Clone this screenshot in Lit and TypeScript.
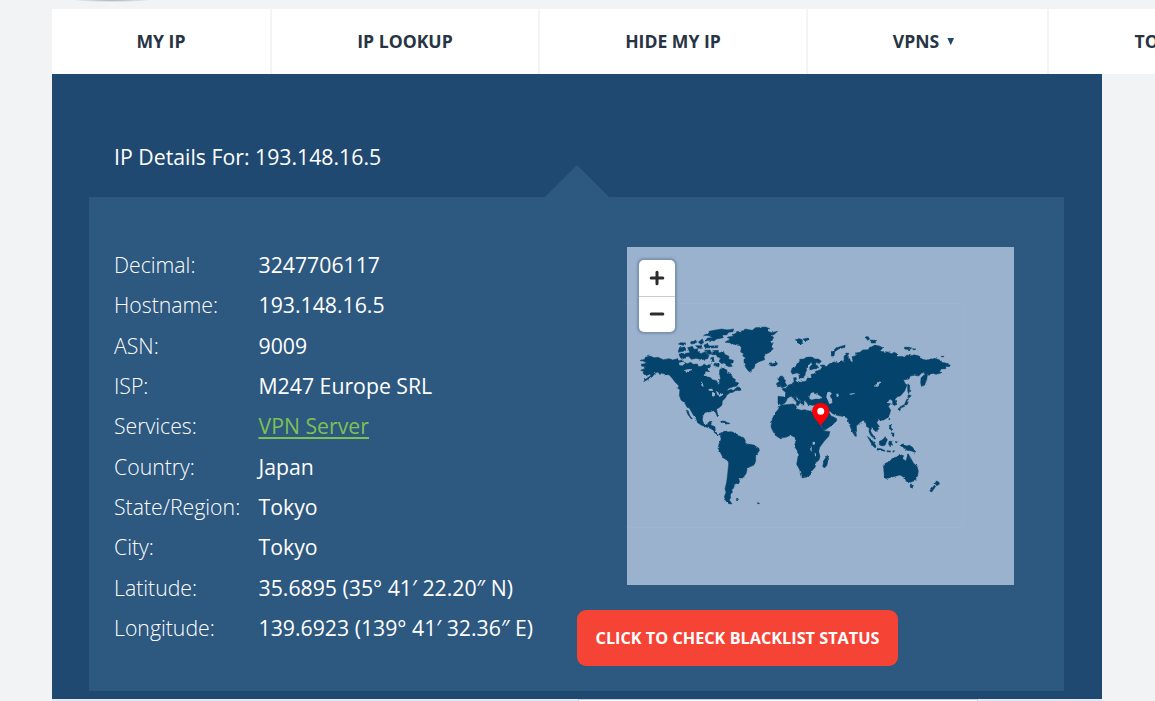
import { LitElement, html, css, svg } from "lit";
import { customElement } from "lit/decorators.js";

const NAV = [
  { label: "MY IP", cls: "t1" },
  { label: "IP LOOKUP", cls: "t2" },
  { label: "HIDE MY IP", cls: "t3" },
  { label: "VPNS", cls: "t4", menu: true },
  { label: "TOOLS", cls: "t5", menu: true },
];

const ROWS = [
  ["Decimal:", "3247706117"],
  ["Hostname:", "193.148.16.5"],
  ["ASN:", "9009"],
  ["ISP:", "M247 Europe SRL"],
  ["Services:", "VPN Server"],
  ["Country:", "Japan"],
  ["State/Region:", "Tokyo"],
  ["City:", "Tokyo"],
  ["Latitude:", "35.6895 (35° 41′ 22.20″ N)"],
  ["Longitude:", "139.6923 (139° 41′ 32.36″ E)"],
];

// Landmasses of the western hemisphere
const WEST = [
  "M33 151L44 148 46 142 60 138 72 143 84 142 100 149 118 146 127 150 140 147 148 152 158 149 160 156 172 161 182 157 190 163 202 162 206 170 217 168 222 162 232 168 241 163 241 171 234 177 236 185 226 184 224 195 232 201 242 203 247 209 260 212 264 224 269 220 268 210 272 204 268 195 269 180 276 172 284 174 290 181 292 192 299 188 304 193 308 204 316 208 315 215 326 219 323 227 308 231 296 235 290 243 304 238 309 242 322 231 328 232 336 239 327 242 319 240 309 247 300 248 291 255 286 264 277 273 276 285 270 291 260 298 262 310 266 318 262 320 257 308 250 302 238 306 226 307 219 315 217 330 222 342 232 344 236 335 246 334 242 345 255 350 256 364 263 372 274 369 272 375 262 375 249 364 244 356 228 351 213 345 203 338 199 327 190 315 178 294 171 292 165 280 153 270 148 256 150 239 143 235 147 228 135 216 126 204 118 195 104 192 94 189 90 194 84 186 76 189 67 200 56 207 41 215 45 209 62 197 60 192 48 197 39 190 41 184 32 181 43 176 49 171 34 168 34 163 49 160 46 156Z",
  "M168 301L174 302 179 316 187 326 184 327 175 316Z",
  "M275 370L280 365 289 361 292 366 303 365 316 368 321 376 334 380 342 384 347 394 345 400 355 402 371 405 387 415 388 422 377 437 377 454 371 466 360 470 352 475 348 491 339 503 331 507 326 504 329 517 313 523 311 534 305 540 308 546 301 553 302 563 298 570 306 582 296 581 288 574 283 560 288 547 285 537 290 516 293 491 296 461 294 452 279 443 270 425 264 415 268 398 273 389 271 378Z",
  "M285 97L300 87 294 81 312 78 306 74 319 70 319 65 340 63 345 57 367 61 376 53 407 51 419 56 410 62 425 68 443 64 433 73 424 77 431 82 424 95 429 101 423 110 430 116 417 128 408 132 402 140 404 149 387 155 376 162 372 175 365 178 363 187 356 184 347 172 342 158 342 148 348 144 338 138 341 131 332 126 334 112 325 103 306 103 299 98Z",
  "M221 76L238 69 237 64 257 60 275 57 292 60 311 57 309 65 296 67 291 74 277 76 280 83 260 87 252 93 238 91 226 94 232 84 248 83 237 77Z",
  "M147 113L164 111 168 118 160 124 145 127ZM145 102L152 98 168 99 158 106ZM173 113L187 109 192 118 203 116 203 124 213 131 225 125 237 137 233 146 216 149 198 145 184 148 176 139 165 141 166 130 180 128ZM147 132L160 130 169 138 162 146 150 141Z",
  "M181 97L197 91 202 96 188 102ZM205 96L217 87 221 98 212 103ZM197 107L213 107 217 115 205 115ZM222 105L232 101 238 108 264 107 263 113 241 114 226 113ZM224 121L240 120 247 132 234 133Z",
  "M248 122L262 121 268 129 280 124 284 133 297 139 296 147 310 151 309 159 301 160 307 169 297 170 286 165 283 158 275 161 267 154 272 145 262 141 259 134 248 134ZM254 159L268 162 266 171 251 166ZM242 144L250 141 253 151 245 155Z",
  "M416 160L424 158 428 162 438 156 443 162 435 168 424 168 417 164Z",
  "M455 204L462 201 461 208 467 211 464 217 471 227 463 231 453 233 458 225 454 218ZM444 219L451 217 450 229 442 231Z",
  "M272 334L282 333 291 337 286 339 273 337ZM282 338L295 338 300 341 286 342Z",
  "M319 568L326 568 322 573ZM382 578L389 580 384 582Z",
];

// Landmasses of the eastern hemisphere
const EAST = [
  "M39 214L60 216 62 202 52 194 53 190 66 190 69 181 79 177 87 171 86 158 94 158 94 168 107 172 124 168 127 159 140 159 138 148 154 146 150 140 166 134 172 126 165 121 177 120 184 125 193 116 207 111 219 114 228 106 238 112 237 95 243 84 252 85 247 94 255 103 255 111 264 110 261 95 273 92 272 84 285 82 293 75 310 74 314 67 330 61 341 62 354 68 344 79 369 81 379 86 388 82 398 87 397 95 411 94 418 97 426 90 436 92 450 89 464 94 472 103 487 106 496 102 514 101 529 107 529 112 542 114 556 121 553 125 542 124 543 131 530 132 524 138 528 144 513 148 504 145 497 150 487 151 485 166 478 181 469 184 467 173 468 159 476 151 479 141 469 145 461 153 448 151 436 153 432 162 415 165 421 176 426 180 419 198 406 213 397 215 390 223 396 239 390 242 383 238 383 227 375 222 370 228 366 234 377 236 370 244 377 256 373 270 366 279 356 285 347 286 341 284 335 293 343 304 341 312 333 320 327 315 320 309 316 318 323 329 332 341 329 343 318 332 312 321 313 309 305 305 302 292 294 286 286 292 274 303 275 318 271 328 266 328 258 311 251 292 247 279 240 276 226 273 215 271 203 266 194 258 191 260 198 273 206 276 215 281 215 287 201 301 180 315 174 313 166 296 157 275 152 255 153 241 142 241 129 239 124 230 122 226 116 229 118 240 110 240 106 226 98 219 92 214 95 224 108 232 103 236 99 243 93 240 95 232 85 220 78 214 67 220 64 228 60 234 49 240 39 235Z",
  "M78 141L81 130 89 128 98 113 105 109 104 103 117 102 124 97 139 96 150 102 160 102 169 108 164 115 153 112 152 120 161 124 155 131 145 132 135 136 134 126 142 118 139 112 130 120 124 130 125 136 121 144 119 153 110 159 103 159 101 145 94 144 83 148Z",
  "M38 175L43 170 40 163 45 154 53 153 51 161 58 168 63 180 51 184 43 184 48 177ZM35 175L41 171 40 180 35 180Z",
  "M91 44L104 41 113 45 109 50 114 55 104 59 98 51ZM114 42L131 39 132 44 120 48Z",
  "M198 93L201 81 213 69 234 62 240 61 240 67 221 72 209 80 207 93Z",
  "M301 37L308 33 314 42 308 46ZM315 45L331 46 332 54 319 54Z",
  "M418 67L429 66 440 69 434 74 419 72ZM442 71L453 72 446 75ZM528 94L537 94 533 98Z",
  "M428 178L434 178 434 197 431 206 428 198ZM430 209L439 212 432 219 428 215ZM427 220L431 221 428 237 419 244 406 250 401 251 407 244 418 239ZM401 250L406 251 403 258 399 255Z",
  "M44 243L51 240 62 239 84 237 92 241 96 252 109 256 119 254 133 258 150 257 155 268 162 286 168 304 177 317 195 320 191 334 178 348 164 367 161 379 165 394 162 405 151 414 151 426 141 437 136 450 125 456 112 459 108 454 104 434 95 418 99 395 97 377 88 364 92 350 90 337 77 331 62 337 43 339 31 331 23 317 18 306 22 281 31 263 40 253Z",
  "M187 391L191 401 185 422 178 429 173 424 177 406Z",
  "M355 420L363 414 374 409 384 398 397 396 404 388 416 392 412 401 423 408 429 386 437 399 445 414 456 424 460 438 458 451 451 466 437 472 421 468 414 455 405 450 385 455 363 461 358 456 357 438Z",
  "M435 481L445 481 442 490 437 488Z",
  "M514 468L520 470 524 477 515 482 510 476ZM508 481L512 484 506 493 500 501 494 498Z",
  "M403 359L415 357 423 363 434 361 444 368 450 382 437 377 426 376 413 367Z",
  "M343 349L352 345 361 335 367 344 360 361 351 363 343 359Z",
  "M307 334L317 342 328 354 333 364 331 369 323 362 315 348ZM335 370L348 371 361 377 358 379 336 374Z",
  "M372 349L385 349 379 352 383 361 378 359 375 364 371 358ZM390 350L398 350 394 354ZM366 377L377 378 376 381 366 380ZM382 377L389 377 385 382Z",
  "M373 300L378 298 378 308 384 315 379 317 374 309ZM379 323L387 325 387 335 379 331ZM371 279L375 279 374 285ZM269 326L274 326 274 334 269 333Z",
];

// Lakes and inland seas
const WEST_LAKES = [
  "M147 158L159 155 166 160 157 167 148 165ZM165 179L180 177 187 180 174 184 169 189ZM212 214L218 220 221 230 215 228ZM231 237L247 236 249 243 238 242ZM246 247L253 247 251 260 246 258ZM257 242L265 247 268 256 263 256ZM266 255L279 250 279 255 268 261Z",
];
const EAST_LAKES = [
  "M187 202L195 200 202 208 195 215 201 222 202 234 193 237 188 225 184 215ZM214 206L222 206 220 215 215 215ZM253 206L270 204 268 208 255 209ZM330 184L338 173 346 168 344 176 334 186Z",
  "M133 216L138 204 147 202 149 208 157 204 160 210 171 217 168 222 152 221 141 224 134 222Z",
  "M143 350L150 351 150 358 143 360ZM136 364L140 370 140 381 136 375ZM149 383L153 386 153 395 149 391Z",
];

@customElement("world-map")
export class WorldMap extends LitElement {
  static styles = css`
    :host { display: block; position: relative; width: 387px; height: 338px; background: #9ab2cd; }
    .map { display: block; width: 387px; height: 338px; }
    .land { fill: #04436b; stroke: #04436b; stroke-width: 1.5; stroke-linejoin: round; }
    .lake { fill: #9ab2cd; }
    .edge { fill: none; stroke: #9fb5cf; stroke-width: 1; }
    .zoom {
      position: absolute; left: 12px; top: 13px; width: 36px; height: 72px;
      display: flex; flex-direction: column; background: #fff; border-radius: 5px;
      box-shadow: 0 0 2px 1.5px rgba(60, 90, 125, 0.35);
    }
    .key {
      flex: 1; display: flex; align-items: center; justify-content: center;
      padding: 0; border: 0; background: none;
    }
    .key + .key { border-top: 1px solid #ccc; }
    .sign { width: 16px; height: 16px; stroke: #2c2c2e; stroke-width: 3; stroke-linecap: round; }
  `;

  render() {
    const paths = (list: string[], cls: string) => list.map((d) => svg`<path class=${cls} d=${d} />`);
    return html`
      <svg class="map" viewBox="627 247 387 338">
        <defs>
          <filter id="coast" filterUnits="userSpaceOnUse" x="627" y="247" width="387" height="338" color-interpolation-filters="sRGB">
            <feTurbulence type="fractalNoise" baseFrequency="0.3" numOctaves="2" seed="4" result="n" />
            <feDisplacementMap in="SourceGraphic" in2="n" scale="2.4" xChannelSelector="R" yChannelSelector="G" />
            <feGaussianBlur stdDeviation="0.3" />
          </filter>
        </defs>
        <path class="edge" d="M627 303.5H963.5V527.5H627" />
        <g filter="url(#coast)">
          <g transform="translate(630 310) scale(.33333)">
            ${paths(WEST, "land")}${paths(WEST_LAKES, "lake")}
          </g>
          <g transform="translate(765 325) scale(.33333)">
            ${paths(EAST, "land")}${paths(EAST_LAKES, "lake")}
          </g>
        </g>
        <path fill="#fb0007" d="M820.6 426.2C818.8 421.6 812.1 417.5 812.1 411.2A8.6 8.3 0 0 1 829.3 411.2C829.3 417.5 822.4 421.6 820.6 426.2Z" />
        <circle cx="820.7" cy="411.2" r="3.5" fill="#fff" />
      </svg>
      <div class="zoom">
        <button class="key" aria-label="Zoom in">
          <svg class="sign" viewBox="0 0 16 16"><path d="M2.2 8H13.8M8 2.2V13.8" /></svg>
        </button>
        <button class="key" aria-label="Zoom out">
          <svg class="sign" viewBox="0 0 16 16"><path d="M2.2 8H13.8" /></svg>
        </button>
      </div>
    `;
  }
}

@customElement("app-root")
export class AppRoot extends LitElement {
  static styles = css`
    :host {
      display: block; width: 1155px; height: 701px; overflow: hidden;
      background: #f1f3f5; font-family: "Open Sans", "Noto Sans", sans-serif;
    }
    .top { height: 9px; padding-left: 72px; box-sizing: border-box; overflow: hidden; }
    .shade {
      width: 80px; height: 2px;
      background: radial-gradient(ellipse 40px 2px at 50% 0, #aaa, rgba(180, 180, 180, 0));
    }
    .nav { display: flex; height: 65px; margin-left: 52px; width: 1300px; background: #fff; }
    .tab {
      box-sizing: border-box; display: flex; align-items: center; justify-content: center;
      border-right: 2px solid #f3f4f6; color: #273444; font-size: 17.6px; font-weight: 700;
      white-space: nowrap; flex: none; padding-bottom: 2px;
    }
    .t1 { width: 220px; }
    .t2 { width: 268px; }
    .t3 { width: 268px; }
    .t4 { width: 241px; padding-right: 8px; }
    .t5 { width: 246px; }
    .caret {
      margin: 2px 0 0 8px; width: 7px; height: 7.5px; background: #204971;
      clip-path: polygon(0 0, 100% 0, 50% 100%);
    }
    .panel {
      box-sizing: border-box; margin-left: 52px; width: 1050px; height: 625px;
      padding: 0 38px 8px 37px; background: #204971; color: #fff;
      display: flex; flex-direction: column;
    }
    .head { height: 123px; display: flex; justify-content: space-between; flex: none; }
    .title { margin: 0; padding: 68px 0 0 25px; font-size: 21.27px; line-height: 30px; font-weight: 400; white-space: nowrap; }
    .notch {
      align-self: flex-end; width: 64px; height: 32px; margin-right: 455px;
      background: #2d587f; clip-path: polygon(50% 0, 100% 100%, 0 100%);
    }
    .card { height: 494px; flex: none; background: #2d587f; display: flex; box-sizing: border-box; padding: 47px 50px 0 25px; }
    .facts { width: 463px; flex: none; }
    .row { display: flex; height: 40.33px; font-size: 21.25px; line-height: 41px; white-space: nowrap; }
    .name { width: 144.5px; flex: none; font-weight: 300; }
    .value { font-weight: 400; }
    .link { color: #7dc154; text-decoration: underline; text-decoration-thickness: 2px; text-underline-offset: 3px; }
    .side { display: flex; flex-direction: column; padding-top: 3px; }
    .mapbox { margin-left: 50px; }
    .cta {
      width: 321px; height: 56px; margin-top: 25px; padding: 0; border: 0; border-radius: 9px;
      background: #f54436; color: #fff; font: 700 16.25px "Open Sans", sans-serif; white-space: nowrap;
    }
    .foot { display: flex; margin-left: 52px; width: 1050px; height: 2px; background: #e4e9f3; }
    .field { box-sizing: border-box; margin-left: 526px; width: 400px; height: 2px; background: #fff; border: 1px solid #c9cfd8; border-bottom: 0; }
  `;

  render() {
    return html`
      <div class="top"><div class="shade"></div></div>
      <nav class="nav">
        ${NAV.map((n) => html`<a class="tab ${n.cls}"><span>${n.label}</span>${n.menu ? html`<i class="caret"></i>` : ""}</a>`)}
      </nav>
      <main class="panel">
        <div class="head">
          <h1 class="title">IP Details For: 193.148.16.5</h1>
          <div class="notch"></div>
        </div>
        <section class="card">
          <div class="facts">
            ${ROWS.map(([k, v]) => html`<div class="row">
              <span class="name">${k}</span>
              <span class="value">${k === "Services:" ? html`<a class="link">${v}</a>` : v}</span>
            </div>`)}
          </div>
          <div class="side">
            <world-map class="mapbox"></world-map>
            <button class="cta">CLICK TO CHECK BLACKLIST STATUS</button>
          </div>
        </section>
      </main>
      <div class="foot"><div class="field"></div></div>
    `;
  }
}
